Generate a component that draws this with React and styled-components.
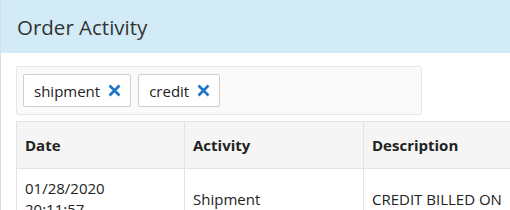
import { styled, createGlobalStyle } from "styled-components"

const GlobalStyle = createGlobalStyle`
  html, body {
    margin: 0;
    padding: 0;
    background: #fff;
    overflow: hidden;
  }
  body {
    font-family: "Open Sans", "Noto Sans", sans-serif;
    color: #222;
  }
`

const Panel = styled.div`
  border-left: 1px solid #cfe0e8;
  width: 560px;
  height: 210px;
  overflow: hidden;
`

const Header = styled.div`
  height: 53px;
  background: #d2ebf6;
  display: flex;
  align-items: center;
  padding: 1px 0 0 16px;
  box-sizing: border-box;
`

const Title = styled.h2`
  margin: 0;
  font-size: 20.5px;
  font-weight: 400;
  color: #333;
`

const Body = styled.div`
  padding: 13px 0 0 15px;
`

const FilterBox = styled.div`
  width: 406px;
  box-sizing: border-box;
  height: 49px;
  border: 1px solid #e6e6e6;
  border-radius: 2px;
  background: #fafafa;
  display: flex;
  align-items: center;
  gap: 7px;
  padding: 0 6px;
  margin-bottom: 6px;
`

const Tag = styled.div`
  height: 33px;
  box-sizing: border-box;
  border: 1px solid #cfcfcf;
  border-radius: 2px;
  background: #fff;
  display: flex;
  align-items: center;
  gap: 8px;
  padding: 0 9px 0 10px;
  font-size: 15px;
  color: #222;
`

const Remove = styled.svg`
  width: 13px;
  height: 13px;
  flex: none;
`

const Table = styled.table`
  border-collapse: collapse;
  width: 600px;
  table-layout: fixed;
`

const Th = styled.th`
  width: ${(p) => p.$w}px;
  background: #f5f5f5;
  border: 1px solid #e3e3e3;
  height: 47px;
  box-sizing: border-box;
  padding: 0 8px;
  text-align: left;
  font-size: 15px;
  font-weight: 700;
  color: #222;
`

const Td = styled.td`
  border: 1px solid #e3e3e3;
  padding: 9px 8px;
  line-height: 21px;
  font-size: 15px;
  color: #222;
  vertical-align: middle;
`

function XIcon() {
  return (
    <Remove viewBox="0 0 13 13">
      <path d="M1.5 1.5 L11.5 11.5 M11.5 1.5 L1.5 11.5" stroke="#1f76c6" strokeWidth="2.7" />
    </Remove>
  )
}

const filters = ["shipment", "credit"]

export default function App() {
  return (
    <>
      <GlobalStyle />
      <Panel>
        <Header>
          <Title>Order Activity</Title>
        </Header>
        <Body>
          <FilterBox>
            {filters.map((f) => (
              <Tag key={f}>
                {f}
                <XIcon />
              </Tag>
            ))}
          </FilterBox>
          <Table>
            <thead>
              <tr>
                <Th $w={168}>Date</Th>
                <Th $w={179}>Activity</Th>
                <Th $w={253}>Description</Th>
              </tr>
            </thead>
            <tbody>
              <tr>
                <Td>
                  01/28/2020
                  <br />
                  20:11:57
                </Td>
                <Td>Shipment</Td>
                <Td>CREDIT BILLED ON</Td>
              </tr>
            </tbody>
          </Table>
        </Body>
      </Panel>
    </>
  )
}
